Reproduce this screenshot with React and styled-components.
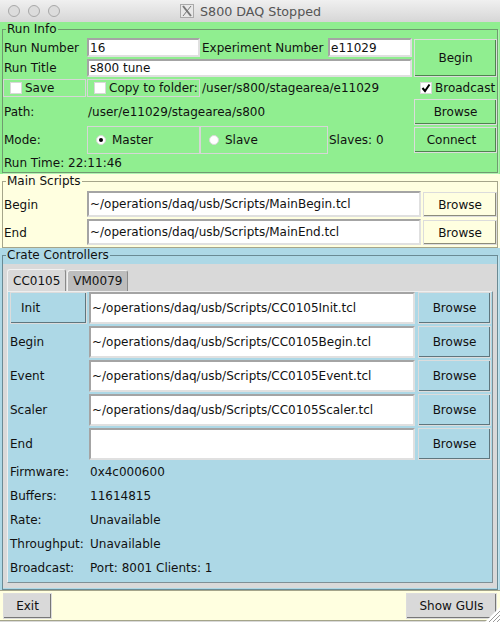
import React from 'react';
import styled, { createGlobalStyle } from 'styled-components';

const GlobalStyle = createGlobalStyle`
  html, body {
    margin: 0;
    padding: 0;
    width: 500px;
    height: 622px;
    overflow: hidden;
    background: #d9d9d9;
    font-family: "DejaVu Sans", sans-serif;
    font-size: 12px;
    color: #111;
  }
  * { box-sizing: border-box; }
`;

const Window = styled.div`
  width: 500px;
  height: 622px;
  display: flex;
  flex-direction: column;
  position: relative;
`;

const TitleBar = styled.div`
  height: 22px;
  flex: none;
  display: flex;
  align-items: center;
  padding-left: 8px;
  background: linear-gradient(#f0f0f0, #d6d6d6);
`;

const Lights = styled.div`
  display: flex;
  gap: 8px;
`;

const Light = styled.span`
  width: 12px;
  height: 12px;
  border-radius: 50%;
  background: #dcdcdc;
  border: 1px solid #a8a8a8;
`;

const TitleText = styled.div`
  display: flex;
  align-items: center;
  gap: 6px;
  margin-left: 120px;
  font-size: 12.7px;
  color: #555;
`;

const Section = styled.div`
  background: ${(p) => p.$bg};
  padding: 0 2px ${(p) => p.$bottom}px 2px;
  height: ${(p) => p.$h}px;
  flex: none;
`;

const Frame = styled.fieldset`
  margin: 0;
  padding: ${(p) => p.$top}px 0 0 0;
  height: 100%;
  min-width: 0;
  border: 1px solid ${(p) => p.$line};
  box-shadow: 1px 1px 0 rgba(255, 255, 255, 0.3);
`;

const Legend = styled.legend`
  margin-left: 3px;
  padding: 0 1px;
  height: 14px;
  line-height: 14px;
  font-size: 12px;
`;

const RunGrid = styled.div`
  display: grid;
  grid-template-columns: 84px 113px 128px 84px 85px;
  grid-template-rows: 20px 20px 20px 28px 28px 18px;
`;

const Label = styled.div`
  display: flex;
  align-items: center;
  padding-left: ${(p) => p.$indent ?? 1}px;
  margin: ${(p) => p.$margin || '0'};
  grid-column: ${(p) => p.$col || 'auto'};
  white-space: nowrap;
`;

const Input = styled.div`
  display: flex;
  align-items: center;
  grid-column: ${(p) => p.$col || 'auto'};
  background: #fff;
  border-style: solid;
  border-width: 2px;
  border-color: #a4a4a4 #e0e0e0 #e0e0e0 #a4a4a4;
  padding-left: 1px;
  margin: ${(p) => p.$margin || '0'};
  white-space: nowrap;
  overflow: hidden;
`;

const Cell = styled.div`
  display: flex;
  align-items: center;
  gap: ${(p) => p.$gap}px;
  padding-left: ${(p) => p.$indent}px;
  margin: ${(p) => p.$margin || '0'};
  grid-column: ${(p) => p.$col || 'auto'};
  border: ${(p) => (p.$flat ? 'none' : '1px solid #d6d6d6')};
  white-space: nowrap;
`;

const Button = styled.div`
  display: flex;
  align-items: center;
  justify-content: ${(p) => p.$justify || 'center'};
  padding: ${(p) => p.$pad || '0'};
  background: ${(p) => p.$bg};
  border: 1px solid #dcdcdc;
  box-shadow: inset -1px -1px 0 rgba(0, 0, 0, 0.45);
  grid-row: ${(p) => p.$row || 'auto'};
  grid-column: ${(p) => p.$col || 'auto'};
  margin: ${(p) => p.$margin || '0'};
  width: ${(p) => (p.$w ? `${p.$w}px` : 'auto')};
  height: ${(p) => (p.$h ? `${p.$h}px` : 'auto')};
  white-space: nowrap;
`;

const CheckBox = styled.span`
  width: 12px;
  height: 12px;
  flex: none;
  background: #fff;
  border: 1px solid #d8d8d8;
  display: flex;
  align-items: center;
  justify-content: center;
`;

const Radio = styled.span`
  width: 10px;
  height: 10px;
  flex: none;
  border-radius: 50%;
  background: #fff;
  border: 1px solid #d8d8d8;
  display: flex;
  align-items: center;
  justify-content: center;
  &::after {
    content: '';
    width: 4px;
    height: 4px;
    border-radius: 50%;
    background: ${(p) => (p.$on ? '#000' : 'transparent')};
  }
`;

const ScriptRow = styled.div`
  display: grid;
  grid-template-columns: ${(p) => p.$cols};
  height: ${(p) => p.$h}px;
`;

const CrateRows = styled.div`
  display: grid;
  row-gap: 1px;
`;

const Notebook = styled.div`
  background: #d9d9d9;
  height: 324px;
  padding: 5px 4px 5px 4px;
`;

const Tabs = styled.div`
  display: flex;
  height: 22px;
  align-items: flex-end;
`;

const Tab = styled.div`
  height: ${(p) => (p.$active ? 22 : 21)}px;
  padding: 0 5px;
  display: flex;
  align-items: center;
  background: ${(p) => (p.$active ? '#d9d9d9' : '#bdbdbd')};
  border-style: solid;
  border-width: 1px 1px 0 1px;
  border-color: #f2f2f2 #8a8a8a #8a8a8a #f2f2f2;
  border-radius: 3px 3px 0 0;
  margin-right: 1px;
`;

const TabPage = styled.div`
  background: #add8e6;
  height: 292px;
  border-style: solid;
  border-width: 1px;
  border-color: #eeeeee #7f8f95 #7f8f95 #eeeeee;
  padding: 0 1px 0 2px;
`;

const InfoList = styled.div`
  display: grid;
  grid-auto-rows: 22px;
  row-gap: 2px;
`;

const InfoRow = styled.div`
  display: grid;
  grid-template-columns: 79px 1fr;
  align-items: center;
`;

const BottomBar = styled.div`
  flex: 1;
  background: #ffffe0;
  display: flex;
  justify-content: space-between;
  align-items: flex-start;
  padding: 2px 3px 0 3px;
  border-style: solid;
  border-color: #a5a58a;
  border-width: 1px 0;
  margin-bottom: 1px;
`;

const Grip = styled.svg`
  position: absolute;
  right: 0;
  bottom: 0;
`;

function Check() {
  return (
    <svg width="10" height="10" viewBox="0 0 10 10">
      <path d="M1.5 5 L4 8 L8.5 1.5" fill="none" stroke="#000" strokeWidth="2" />
    </svg>
  );
}

const crateRows = [
  ['Begin', 'CC0105Begin.tcl'],
  ['Event', 'CC0105Event.tcl'],
  ['Scaler', 'CC0105Scaler.tcl'],
  ['End', ''],
];

const infoRows = [
  ['Firmware:', '0x4c000600'],
  ['Buffers:', '11614815'],
  ['Rate:', 'Unavailable'],
  ['Throughput:', 'Unavailable'],
  ['Broadcast:', 'Port: 8001 Clients: 1'],
];

const scriptDir = '~/operations/daq/usb/Scripts/';
const green = '#90ee90';
const yellow = '#ffffe0';
const blue = '#add8e6';
const mainCols = '84px 334px 1fr';
const crateCols = '79px 326px 76px';

export default function App() {
  return (
    <Window>
      <GlobalStyle />
      <TitleBar>
        <Lights>
          <Light />
          <Light />
          <Light />
        </Lights>
        <TitleText>
          <svg width="14" height="14" viewBox="0 0 14 14">
            <rect x="0.5" y="0.5" width="13" height="13" fill="#e8e8e8" stroke="#aaa" />
            <path d="M3 2 L11 12" stroke="#777" strokeWidth="2" />
            <path d="M11 2 L3 12" stroke="#777" strokeWidth="1" />
          </svg>
          S800 DAQ Stopped
        </TitleText>
      </TitleBar>

      <Section $bg={green} $h={152} $bottom={1}>
        <Frame $line="#6f9a6f" $top={2}>
          <Legend>Run Info</Legend>
          <RunGrid>
            <Label>Run Number</Label>
            <Input $margin="0 0 1px 0">16</Input>
            <Label $indent={2}>Experiment Number</Label>
            <Input $margin="0 0 1px 0">e11029</Input>
            <Button $bg={green} $col="5" $row="1 / span 2" $margin="1px 0 1px 2px">Begin</Button>

            <Label>Run Title</Label>
            <Input $col="2 / span 3" $margin="1px 0">s800 tune</Input>

            <Cell $gap={3} $indent={6} $margin="1px 1px 1px 0">
              <CheckBox />
              Save
            </Cell>
            <Cell $gap={3} $indent={6} $margin="1px 0">
              <CheckBox />
              Copy to folder:
            </Cell>
            <Label $col="3 / span 2" $indent={2}>/user/s800/stagearea/e11029</Label>
            <Cell $flat $gap={3} $indent={8}>
              <CheckBox><Check /></CheckBox>
              Broadcast
            </Cell>

            <Label>Path:</Label>
            <Label $col="2 / span 3" $indent={1}>/user/e11029/stagearea/s800</Label>
            <Button $bg={green} $margin="1px 0 1px 2px">Browse</Button>

            <Label>Mode:</Label>
            <Cell $gap={6} $indent={8}>
              <Radio $on />
              Master
            </Cell>
            <Cell $gap={6} $indent={8}>
              <Radio />
              Slave
            </Cell>
            <Label $indent={1}>Slaves: 0</Label>
            <Button $bg={green} $margin="1px 0 1px 2px" $pad="0 8px 0 0">Connect</Button>

            <Label $col="1 / span 3">Run Time: 22:11:46</Label>
          </RunGrid>
        </Frame>
      </Section>

      <Section $bg={yellow} $h={74} $bottom={0}>
        <Frame $line="#a5a58a" $top={3}>
          <Legend>Main Scripts</Legend>
          <ScriptRow $cols={mainCols} $h={28}>
            <Label>Begin</Label>
            <Input $margin="0 0 2px 0">{scriptDir}MainBegin.tcl</Input>
            <Button $bg={yellow} $margin="1px 0 2px 2px">Browse</Button>
          </ScriptRow>
          <ScriptRow $cols={mainCols} $h={28}>
            <Label>End</Label>
            <Input $margin="0 0 2px 0">{scriptDir}MainEnd.tcl</Input>
            <Button $bg={yellow} $margin="1px 0 2px 2px">Browse</Button>
          </ScriptRow>
        </Frame>
      </Section>

      <Section $bg={blue} $h={342} $bottom={0}>
        <Frame $line="#6a8a94" $top={2}>
          <Legend>Crate Controllers</Legend>
          <Notebook>
            <Tabs>
              <Tab $active>CC0105</Tab>
              <Tab>VM0079</Tab>
            </Tabs>
            <TabPage>
              <CrateRows>
                <ScriptRow $cols={crateCols} $h={33}>
                  <Button $bg={blue} $margin="0 2px 1px 0" $justify="flex-start" $pad="0 0 0 10px">Init</Button>
                  <Input $margin="0 0 1px 0">{scriptDir}CC0105Init.tcl</Input>
                  <Button $bg={blue} $margin="0 0 1px 3px">Browse</Button>
                </ScriptRow>
                {crateRows.map(([name, file]) => (
                  <ScriptRow $cols={crateCols} $h={33} key={name}>
                    <Label $indent={0} $margin="0 0 1px 0">{name}</Label>
                    <Input $margin="0 0 1px 0">{file && `${scriptDir}${file}`}</Input>
                    <Button $bg={blue} $margin="0 0 1px 3px">Browse</Button>
                  </ScriptRow>
                ))}
              </CrateRows>
              <InfoList>
                {infoRows.map(([name, value]) => (
                  <InfoRow key={name}>
                    <Label $indent={0}>{name}</Label>
                    <Label $indent={1}>{value}</Label>
                  </InfoRow>
                ))}
              </InfoList>
            </TabPage>
          </Notebook>
        </Frame>
      </Section>

      <BottomBar>
        <Button $bg="#d9d9d9" $w={49} $h={26}>Exit</Button>
        <Button $bg="#d9d9d9" $w={91} $h={26}>Show GUIs</Button>
      </BottomBar>
      <Grip width="15" height="15" viewBox="0 0 15 15">
        <path d="M0 15 L15 0 L15 15 Z" fill="#fff" />
        <path d="M4 15 L15 4 M8 15 L15 8 M12 15 L15 12" stroke="#999" strokeWidth="1" />
      </Grip>
    </Window>
  );
}
